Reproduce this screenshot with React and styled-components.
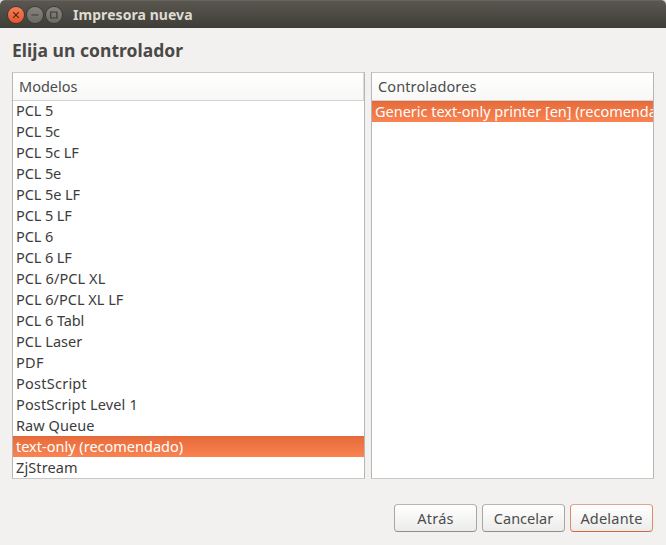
import React from "react";
import styled, { createGlobalStyle, css } from "styled-components";

const Global = createGlobalStyle`
  * { box-sizing: border-box; }
  body { margin: 0; background: #dcdcdc; overflow: hidden; }
`;

const Window = styled.main`
  width: 666px;
  height: 545px;
  display: flex;
  flex-direction: column;
  overflow: hidden;
  border-radius: 5px 5px 0 0;
  background: #f2f1f0;
  color: #3c3c3c;
  font: 14.5px/21px "Noto Sans", "Open Sans", sans-serif;
  white-space: nowrap;
`;

const TitleBar = styled.header`
  height: 28px;
  flex: none;
  display: flex;
  align-items: center;
  gap: 3px;
  padding: 0 0 0 7.5px;
  background: linear-gradient(#59574f, #3e3d38);
  border-top: 1px solid #66645c;
`;

const WindowButton = styled.button`
  width: 16px;
  height: 16px;
  padding: 0;
  border: 0;
  border-radius: 50%;
  display: block;
  background: ${(p) =>
    p.$close ? "linear-gradient(#f37d58, #e9552a)" : "linear-gradient(#85837b, #6c6a63)"};
  box-shadow: 0 0 0 1px #3c3b36;
  svg { display: block; }
`;

const WindowTitle = styled.div`
  margin-left: 8.5px;
  color: #dfdbd2;
  font-size: 14px;
  font-weight: 700;
  letter-spacing: 0.06px;
`;

const Content = styled.section`
  flex: 1;
  display: flex;
  flex-direction: column;
  padding: 11px 12px 13px;
`;

const Heading = styled.h1`
  margin: 0 0 10px;
  height: 23px;
  color: #4a4946;
  font-size: 17.5px;
  line-height: 22px;
  font-weight: 700;
  letter-spacing: 0.02px;
`;

const Panels = styled.div`
  display: grid;
  grid-template-columns: 353px 283px;
  column-gap: 6px;
  height: 407px;
`;

const Panel = styled.div`
  overflow: hidden;
  border: 1px solid #b9b5b0;
  border-top-color: #cbc8c4;
  border-bottom-color: #cbc8c4;
  background: #fff;
`;

const ColumnHeader = styled.div`
  height: 28px;
  margin-bottom: ${(p) => (p.$overlap ? "-1px" : 0)};
  padding: 3px 6px 0;
  color: #4c4c4c;
  background: linear-gradient(#fff, #f8f8f7);
  border-bottom: 1px solid #d6d4d2;
  ${(p) => p.$divider && css`border-right: 1px solid #dddbd9;`}
`;

const Row = styled.div`
  height: 21px;
  padding-left: 3px;
  line-height: 21px;
  overflow: hidden;
  ${(p) =>
    p.$selected &&
    css`
      color: #fff;
      background: linear-gradient(#e66b3a, #f98351);
      box-shadow: inset 0 1px #e0683a;
    `}
`;

const Label = styled.span`
  letter-spacing: ${(p) => p.$track || 0}px;
`;

const Actions = styled.footer`
  display: flex;
  justify-content: flex-end;
  gap: 5px;
  margin-top: 25px;
  padding-right: 1px;
`;

const Button = styled.button`
  width: 83px;
  height: 28px;
  padding: 0;
  border: 1px solid;
  border-color: ${(p) => (p.$primary ? "#e0a58f #dc8a6c #d3683f" : "#b8b4b0 #a9a6a2 #918e8a")};
  border-radius: 4px;
  background: linear-gradient(#fff, #ececeb);
  color: #4c4c4c;
  font: inherit;
  line-height: 24px;
`;

const models = [
  ["PCL 5", -0.1], ["PCL 5c", -0.1], ["PCL 5c LF", -0.08], ["PCL 5e", -0.1],
  ["PCL 5e LF", -0.08], ["PCL 5 LF", -0.1], ["PCL 6", -0.1], ["PCL 6 LF", -0.1],
  ["PCL 6/PCL XL", 0.08], ["PCL 6/PCL XL LF"], ["PCL 6 Tabl", -0.08], ["PCL Laser"],
  ["PDF", 0.3], ["PostScript", 0.25], ["PostScript Level 1", 0.15], ["Raw Queue", 0.05],
  ["text-only (recomendado)"], ["ZjStream", 0.1],
];
const SELECTED = 16;

const glyphs = {
  close: "M5.2 5.2 10.8 10.8M10.8 5.2 5.2 10.8",
  minimize: "M4.5 8H11.5",
  maximize: "M4.7 5H10.9V11H4.7Z",
};

function Control({ kind }) {
  return (
    <WindowButton $close={kind === "close"} aria-label={kind}>
      <svg width="16" height="16" viewBox="0 0 16 16">
        <path d={glyphs[kind]} fill="none" stroke={kind === "close" ? "#51291c" : "#3c3b37"} strokeWidth="1.2" />
      </svg>
    </WindowButton>
  );
}

export default function App() {
  return (
    <>
      <Global />
      <Window>
        <TitleBar>
          <Control kind="close" />
          <Control kind="minimize" />
          <Control kind="maximize" />
          <WindowTitle>Impresora nueva</WindowTitle>
        </TitleBar>
        <Content>
          <Heading>Elija un controlador</Heading>
          <Panels>
            <Panel>
              <ColumnHeader $overlap $divider><Label>Modelos</Label></ColumnHeader>
              {models.map(([name, track], i) => (
                <Row key={name} $selected={i === SELECTED}><Label $track={track}>{name}</Label></Row>
              ))}
            </Panel>
            <Panel>
              <ColumnHeader><Label $track={0.12}>Controladores</Label></ColumnHeader>
              <Row $selected><Label $track={-0.02}>Generic text-only printer [en] (recomendado)</Label></Row>
            </Panel>
          </Panels>
          <Actions>
            <Button><Label $track={0.2}>Atrás</Label></Button>
            <Button><Label>Cancelar</Label></Button>
            <Button $primary><Label $track={0.2}>Adelante</Label></Button>
          </Actions>
        </Content>
      </Window>
    </>
  );
}
